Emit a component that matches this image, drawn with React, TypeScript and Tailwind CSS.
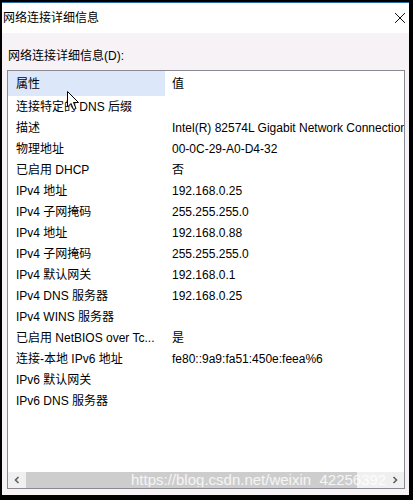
import React from 'react';

const rows: [string, string][] = [
  ['连接特定的 DNS 后缀', ''],
  ['描述', 'Intel(R) 82574L Gigabit Network Connection'],
  ['物理地址', '00-0C-29-A0-D4-32'],
  ['已启用 DHCP', '否'],
  ['IPv4 地址', '192.168.0.25'],
  ['IPv4 子网掩码', '255.255.255.0'],
  ['IPv4 地址', '192.168.0.88'],
  ['IPv4 子网掩码', '255.255.255.0'],
  ['IPv4 默认网关', '192.168.0.1'],
  ['IPv4 DNS 服务器', '192.168.0.25'],
  ['IPv4 WINS 服务器', ''],
  ['已启用 NetBIOS over Tc...', '是'],
  ['连接-本地 IPv6 地址', 'fe80::9a9:fa51:450e:feea%6'],
  ['IPv6 默认网关', ''],
  ['IPv6 DNS 服务器', ''],
];

const font = { fontFamily: '"Liberation Sans", "Noto Sans CJK SC", sans-serif' };

export default function App() {
  return (
    <div
      className="w-[413px] h-[500px] bg-black pl-[2px] pt-[2px] pr-[4px] pb-[5px] text-[12px] text-black"
      style={font}
    >
      <div className="relative flex flex-col h-full border-t border-[#2a6aa6]">
        {/* Title bar */}
        <div className="h-[30px] bg-white flex items-center justify-between pl-[1px] pr-[2px]">
          <span className="text-[12px] leading-none">网络连接详细信息</span>
          <svg width="12" height="12" viewBox="0 0 12 12" className="mr-[1px]">
            <path d="M1 1 L11 11 M11 1 L1 11" stroke="#111" strokeWidth="1" />
          </svg>
        </div>

        {/* Body */}
        <div className="flex-1 flex flex-col bg-[#f6f2f6] pl-[5px] pr-[4px] pb-[6px]">
          <div className="h-[37px] flex items-end pb-[5px] pl-[1px]">网络连接详细信息(D):</div>
          <div className="flex-1 flex flex-col border border-[#8a8890] bg-white overflow-hidden">
            {/* Header */}
            <div className="h-[25px] flex items-center">
              <div className="w-[157px] h-full bg-[#dce8fa] flex items-center pl-[8px]">属性</div>
              <div className="pl-[7px]">值</div>
            </div>
            {/* Rows */}
            <div className="flex-1 flex flex-col">
              {rows.map(([k, v], i) => (
                <div key={i} className="h-[21px] flex items-center whitespace-nowrap">
                  <div className="w-[157px] shrink-0 pl-[8px]">{k}</div>
                  <div className="pl-[7px]">{v}</div>
                </div>
              ))}
            </div>
            {/* Horizontal scrollbar */}
            <div className="h-[16px] flex bg-[#f0f0f0]">
              <div className="w-[18px] flex items-center justify-center">
                <svg width="8" height="8" viewBox="0 0 8 8">
                  <path d="M5.5 1 L2.5 4 L5.5 7" stroke="#606060" strokeWidth="1.6" fill="none" />
                </svg>
              </div>
              <div className="w-[331px] bg-[#cdcdcd]" />
              <div className="flex-1" />
              <div className="w-[18px] flex items-center justify-center">
                <svg width="8" height="8" viewBox="0 0 8 8">
                  <path d="M2.5 1 L5.5 4 L2.5 7" stroke="#606060" strokeWidth="1.6" fill="none" />
                </svg>
              </div>
            </div>
          </div>
        </div>

        {/* Mouse cursor */}
        <svg
          className="absolute left-[65px] top-[88px]"
          width="13"
          height="20"
          viewBox="0 0 13 20"
        >
          <path
            d="M0.5 0.5 L0.5 16 L4 12.5 L6.5 18.5 L9 17.5 L6.5 11.5 L11.5 11.5 Z"
            fill="white"
            stroke="black"
            strokeWidth="1"
          />
        </svg>

        {/* Watermark */}
        <div
          className="absolute left-[129px] top-[469px] text-[15px] leading-none text-white/80 whitespace-nowrap overflow-hidden w-[272px]"
          style={{ fontFamily: '"Liberation Sans", sans-serif' }}
        >
          https://blog.csdn.net/weixin_42256392
        </div>
      </div>
    </div>
  );
}
